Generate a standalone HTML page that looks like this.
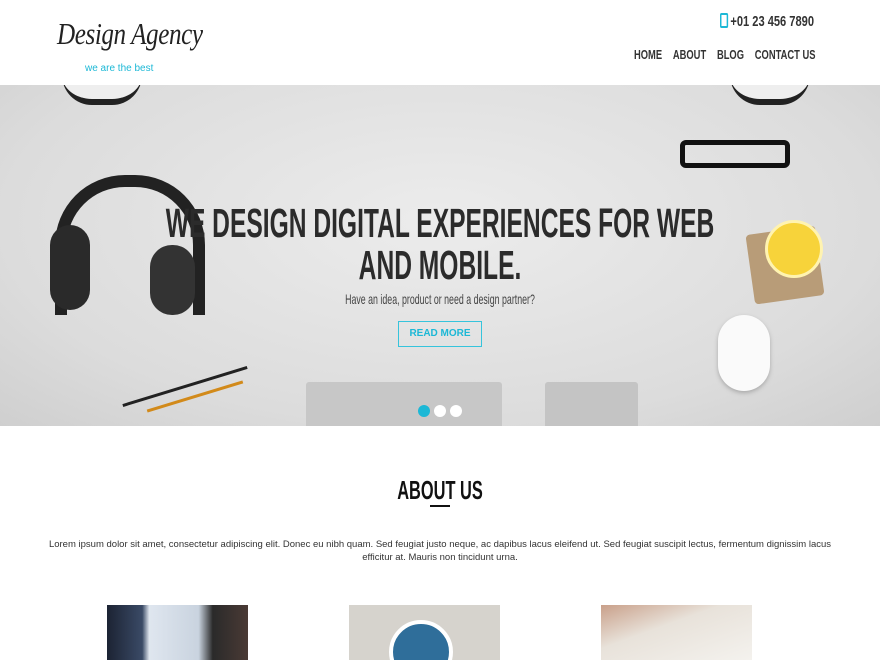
<!DOCTYPE html>
<html><head><meta charset="utf-8"><style>
*{margin:0;padding:0;box-sizing:border-box}
body{width:880px;height:660px;overflow:hidden;background:#fff;font-family:"Liberation Sans",sans-serif;position:relative}
.n{font-family:"Liberation Sans",sans-serif;font-weight:bold}
.abs{position:absolute}
</style></head><body>
<div class="abs" style="left:57px;top:16px;font-family:'Liberation Serif',serif;font-style:italic;font-size:31px;color:#222;letter-spacing:-0.5px;transform:scaleX(0.81);transform-origin:left">Design Agency</div>
<div class="abs" style="left:85px;top:63px;font-size:10px;color:#1cb8d6">we are the best</div>
<div class="abs n" style="left:720px;top:13px;font-size:15px;color:#333;transform:scaleX(0.74);transform-origin:left;white-space:nowrap"><span style="display:inline-block;width:11px;height:15px;border:2px solid #1cb8d6;border-radius:2px;vertical-align:-2px;margin-right:3px"></span>+01 23 456 7890</div>
<div class="abs n" style="left:634px;top:47px;font-size:13px;color:#333;transform:scaleX(0.72);transform-origin:left;white-space:nowrap">
<span style="margin-right:15px">HOME</span><span style="margin-right:15px">ABOUT</span><span style="margin-right:15px">BLOG</span><span>CONTACT US</span></div>

<div class="abs" style="left:0;top:85px;width:880px;height:341px;background:radial-gradient(ellipse at 50% 40%,#ececec,#dcdcdc 70%,#cfcfcf);overflow:hidden">
 <div class="abs" style="left:62px;top:-10px;width:80px;height:30px;background:#eee;border-radius:0 0 30px 30px;border-bottom:6px solid #222"></div>
 <div class="abs" style="left:730px;top:-10px;width:80px;height:30px;background:#eee;border-radius:0 0 30px 30px;border-bottom:6px solid #222"></div>
 <div class="abs" style="left:55px;top:90px;width:150px;height:140px;border:12px solid #222;border-bottom:none;border-radius:70px 70px 0 0"></div>
 <div class="abs" style="left:50px;top:140px;width:40px;height:85px;background:#2a2a2a;border-radius:20px"></div>
 <div class="abs" style="left:150px;top:160px;width:45px;height:70px;background:#333;border-radius:22px"></div>
 <div class="abs" style="left:680px;top:55px;width:110px;height:28px;border:5px solid #111;border-radius:6px"></div>
 <div class="abs" style="left:750px;top:145px;width:70px;height:70px;background:#b89c78;border-radius:4px;transform:rotate(-8deg)"></div>
 <div class="abs" style="left:765px;top:135px;width:58px;height:58px;background:#f7d33a;border-radius:50%;border:3px solid #fff3b0"></div>
 <div class="abs" style="left:718px;top:230px;width:52px;height:76px;background:#fafafa;border-radius:26px;box-shadow:0 2px 4px #aaa"></div>
 <div class="abs" style="left:120px;top:300px;width:130px;height:3px;background:#222;transform:rotate(-17deg)"></div>
 <div class="abs" style="left:145px;top:310px;width:100px;height:3px;background:#d28a1a;transform:rotate(-17deg)"></div>
 <div class="abs" style="left:306px;top:297px;width:196px;height:50px;background:#c7c7c7;border-radius:3px"></div>
 <div class="abs" style="left:545px;top:297px;width:93px;height:50px;background:#c4c4c4;border-radius:3px"></div>
 <div class="abs n" style="left:-200px;top:117px;width:1280px;text-align:center;font-size:41px;line-height:42px;color:#2b2b2b;transform:scaleX(0.6)">WE DESIGN DIGITAL EXPERIENCES FOR WEB<br>AND MOBILE.</div>
 <div class="abs" style="left:0;top:206px;width:880px;text-align:center;font-size:14px;color:#444;transform:scaleX(0.63)">Have an idea, product or need a design partner?</div>
 <div class="abs" style="left:398px;top:236px;width:84px;height:26px;border:1px solid #36c4dc;color:#1cb8d6;font-size:10px;font-weight:bold;text-align:center;line-height:24px">READ MORE</div>
 <div class="abs" style="left:418px;top:320px;width:12px;height:12px;border-radius:50%;background:#1cb8d6"></div>
 <div class="abs" style="left:434px;top:320px;width:12px;height:12px;border-radius:50%;background:#fff"></div>
 <div class="abs" style="left:450px;top:320px;width:12px;height:12px;border-radius:50%;background:#fff"></div>
</div>

<div class="abs n" style="left:0;top:475px;width:880px;text-align:center;font-size:26px;color:#111;transform:scaleX(0.63)">ABOUT US</div>
<div class="abs" style="left:430px;top:505px;width:20px;height:2px;background:#111"></div>
<div class="abs" style="left:45px;top:538px;width:790px;text-align:center;font-size:9.5px;line-height:13px;color:#333">Lorem ipsum dolor sit amet, consectetur adipiscing elit. Donec eu nibh quam. Sed feugiat justo neque, ac dapibus lacus eleifend ut. Sed feugiat suscipit lectus, fermentum dignissim lacus efficitur at. Mauris non tincidunt urna.</div>

<div class="abs" style="left:107px;top:605px;width:141px;height:55px;background:linear-gradient(90deg,#1c2333 0,#3a4a66 25%,#dfe6ef 30%,#c9d3df 65%,#2a2a2a 75%,#4a3a35)"></div>
<div class="abs" style="left:349px;top:605px;width:151px;height:55px;background:#d6d3cd;overflow:hidden"><div class="abs" style="left:40px;top:15px;width:64px;height:64px;border-radius:50%;background:#2f6e9a;border:4px solid #fff"></div></div>
<div class="abs" style="left:601px;top:605px;width:151px;height:55px;background:linear-gradient(160deg,#c9a08a 0,#e8e2da 40%,#f4f2ee)"></div>
</body></html>
